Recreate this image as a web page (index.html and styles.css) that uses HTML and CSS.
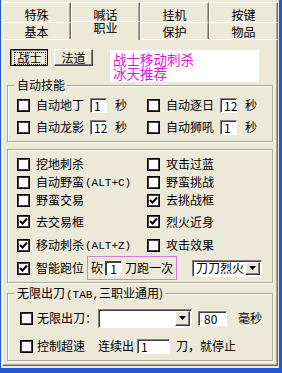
FILE: index.html
```html
<!DOCTYPE html>
<html lang="zh-CN">
<head>
    <meta charset="UTF-8">
    <meta name="viewport" content="width=device-width, initial-scale=1.0">
    <title>职业</title>
    <link rel="stylesheet" href="styles.css">
</head>
<body>
<div class="window">
    <div class="tab-row back">
        <div class="tab">特殊</div>
        <div class="tab">喊话</div>
        <div class="tab">挂机</div>
        <div class="tab">按键</div>
    </div>
    <div class="tab-row front">
        <div class="tab">基本</div>
        <div class="tab active">职业</div>
        <div class="tab">保护</div>
        <div class="tab">物品</div>
    </div>

    <div class="pane">
        <div class="class-row">
            <div class="btn pressed"><span class="focus">战士</span></div>
            <div class="btn">法道</div>
            <div class="note">战士移动刺杀<br>冰天推荐</div>
        </div>

        <fieldset class="group skills">
            <legend>自动技能</legend>
            <div class="grid">
                <div class="opt"><span class="cb"></span><span class="name">自动地丁</span><span class="num">1</span><span class="unit">秒</span></div>
                <div class="opt"><span class="cb"></span><span class="name">自动逐日</span><span class="num">12</span><span class="unit">秒</span></div>
                <div class="opt"><span class="cb"></span><span class="name">自动龙影</span><span class="num">12</span><span class="unit">秒</span></div>
                <div class="opt"><span class="cb"></span><span class="name">自动狮吼</span><span class="num">1</span><span class="unit">秒</span></div>
            </div>
        </fieldset>

        <fieldset class="group options">
            <div class="grid">
                <div class="opt"><span class="cb"></span>挖地刺杀</div>
                <div class="opt"><span class="cb"></span>攻击过蓝</div>
                <div class="opt"><span class="cb"></span>自动野蛮<span class="asc">(ALT+C)</span></div>
                <div class="opt"><span class="cb"></span>野蛮挑战</div>
                <div class="opt"><span class="cb"></span>野蛮交易</div>
                <div class="opt"><span class="cb on"><svg width="9" height="9" viewBox="0 0 9 9"><path d="M1 4 L3.5 6.5 L8 1.5" fill="none" stroke="#000" stroke-width="2"/></svg></span>去挑战框</div>
                <div class="opt"><span class="cb on"><svg width="9" height="9" viewBox="0 0 9 9"><path d="M1 4 L3.5 6.5 L8 1.5" fill="none" stroke="#000" stroke-width="2"/></svg></span>去交易框</div>
                <div class="opt"><span class="cb on"><svg width="9" height="9" viewBox="0 0 9 9"><path d="M1 4 L3.5 6.5 L8 1.5" fill="none" stroke="#000" stroke-width="2"/></svg></span>烈火近身</div>
                <div class="opt"><span class="cb on"><svg width="9" height="9" viewBox="0 0 9 9"><path d="M1 4 L3.5 6.5 L8 1.5" fill="none" stroke="#000" stroke-width="2"/></svg></span>移动刺杀<span class="asc">(ALT+Z)</span></div>
                <div class="opt"><span class="cb"></span>攻击效果</div>
                <div class="opt wide">
                    <span class="cb on"><svg width="9" height="9" viewBox="0 0 9 9"><path d="M1 4 L3.5 6.5 L8 1.5" fill="none" stroke="#000" stroke-width="2"/></svg></span>智能跑位
                    <span class="burst">砍<span class="num">1</span>刀跑一次</span>
                    <span class="combo mode"><span class="val">刀刀烈火</span><span class="arrow"><svg width="7" height="4" viewBox="0 0 7 4"><path d="M0 0 H7 L3.5 4 Z" fill="#000"/></svg></span></span>
                </div>
            </div>
        </fieldset>

        <fieldset class="group endless">
            <legend>无限出刀<span class="asc">(TAB,</span>三职业通用)</legend>
            <div class="line">
                <span class="cb"></span><span class="label">无限出刀：</span>
                <span class="combo blade"><span class="val"></span><span class="arrow"><svg width="7" height="4" viewBox="0 0 7 4"><path d="M0 0 H7 L3.5 4 Z" fill="#000"/></svg></span></span>
                <span class="num ms">80</span><span class="unit">毫秒</span>
            </div>
            <div class="line">
                <span class="cb"></span><span class="label">控制超速</span>
                <span class="count">连续出</span><span class="num times">1</span><span class="unit">刀，就停止</span>
            </div>
        </fieldset>
    </div>
</div>
</body>
</html>
```

FILE: styles.css
```css
* {
    box-sizing: border-box;
}
body {
    margin: 0;
    font: 12px/14px "Noto Sans CJK SC", "Liberation Sans", sans-serif;
    color: #000;
    background: #ece9d8;
}
.window {
    width: 282px;
    height: 373px;
    background: #ece9d8;
    border-left: 1px solid #2456d7;
    border-right: 3px solid #2456d7;
    border-bottom: 5px solid #2456d7;
    padding: 2px 0 0 1px;
}

/* Tabs */
.tab-row {
    display: flex;
    width: 276px;
    line-height: 12px;
}
.tab-row.back {
    height: 20px;
}
.tab-row.front {
    height: 17px;
    position: relative;
    z-index: 1;
}
.tab {
    flex: 1;
    text-align: center;
    border-top: 1px solid #fff;
    border-left: 1px solid #fff;
    border-right: 1px solid #716f64;
    box-shadow: inset -1px 0 #aca899;
}
.back .tab {
    padding-top: 6px;
}
.front .tab {
    padding-top: 3px;
}
.front .tab.active {
    margin-top: -1px;
    height: 19px;
    padding-top: 0;
    background: #ece9d8;
}
.pane {
    width: 276px;
    height: 327px;
    border: 1px solid #fff;
    border-right-color: #716f64;
    border-bottom-color: #716f64;
    box-shadow: inset -1px -1px #aca899;
    padding: 9px 0 0 4px;
}

/* Class buttons */
.class-row {
    display: flex;
    align-items: flex-start;
    height: 29px;
    padding-left: 3px;
}
.btn {
    display: flex;
    align-items: center;
    justify-content: center;
    width: 38px;
    height: 17px;
    border: 1px solid;
    border-color: #fff #404040 #404040 #fff;
    box-shadow: inset -1px -1px #808080;
}
.btn + .btn {
    margin-left: 6px;
    width: 39px;
}
.btn.pressed {
    border-color: #000;
    box-shadow: inset 1px 1px #808080;
}
.focus {
    display: flex;
    align-items: center;
    justify-content: center;
    width: 32px;
    height: 13px;
    border: 1px dotted #000;
    margin: 1px 0 0 1px;
}
.note {
    margin: 1px 0 0 17px;
    width: 149px;
    height: 32px;
    background: #fff;
    color: #e414e4;
    font-size: 13.5px;
    line-height: 14px;
    padding: 2px 0 0 3px;
    flex: none;
}

/* Group boxes */
.group {
    margin: 0;
    width: 266px;
    min-width: 0;
    border: 1px solid #aca899;
    box-shadow: inset 1px 1px #fff, 1px 1px #fff;
    padding: 0 0 0 9px;
}
.group legend {
    padding: 0 2px;
    margin-left: -2px;
    background: #ece9d8;
}
.grid {
    display: grid;
    grid-template-columns: 130px 1fr;
}
.opt {
    display: flex;
    align-items: center;
    white-space: nowrap;
}
.cb {
    display: flex;
    align-items: center;
    justify-content: center;
    flex: none;
    width: 13px;
    height: 13px;
    margin-right: 6px;
    background: #fff;
    border: 1px solid #000;
    box-shadow: inset 1px 1px #404040, inset -1px -1px #404040;
}
.num {
    display: inline-block;
    flex: none;
    width: 17px;
    height: 15px;
    background: #fff;
    border: 1px solid;
    border-color: #808080 #fff #fff #808080;
    box-shadow: inset 1px 1px #404040;
    padding-left: 3px;
    line-height: 13px;
}
.asc {
    font-family: "Liberation Mono", monospace;
    font-size: 11px;
    line-height: 12px;
    margin: 1px 0 0 1px;
}

.skills .grid {
    grid-auto-rows: 22px;
    margin-top: 2px;
    padding-bottom: 3px;
}
.skills .name {
    width: 48px;
}
.skills .num {
    margin-left: 6px;
}
.skills .unit {
    margin-left: 8px;
}

.options {
    margin-top: 7px;
    padding-top: 5px;
    padding-bottom: 2px;
}
.options .grid {
    grid-template-rows: 18px 18px 18px 25px 22px 24px;
}
.opt.wide {
    grid-column: 1 / 3;
}
.burst {
    display: flex;
    align-items: center;
    height: 24px;
    margin-left: 3px;
    padding: 0 3px 0 3px;
    border: 1px solid #d77fd7;
}
.burst .num {
    margin: 0 3px 0 2px;
    text-align: center;
    padding-left: 0;
    border-color: #404040 #fff #fff #404040;
}
.combo {
    display: flex;
    align-items: center;
    flex: none;
    background: #fff;
    border: 1px solid;
    border-color: #808080 #fff #fff #808080;
    box-shadow: inset 1px 1px #404040;
    padding: 1px;
}
.combo .val {
    flex: 1;
    padding-left: 2px;
}
.combo .arrow {
    display: flex;
    align-items: center;
    justify-content: center;
    width: 15px;
    height: 100%;
    background: #ece9d8;
    border: 1px solid;
    border-color: #fff #404040 #404040 #fff;
    box-shadow: inset -1px -1px #808080;
}
.combo.mode {
    width: 70px;
    height: 17px;
    margin-left: 15px;
}

.endless {
    margin-top: 3px;
    padding: 0 0 3px 12px;
}
.endless legend {
    margin-left: -5px;
}
.line {
    display: flex;
    align-items: center;
    height: 22px;
    margin-top: 6px;
    white-space: nowrap;
}
.line .cb {
    margin-right: 4px;
}
.line .label {
    width: 61px;
}
.combo.blade {
    width: 94px;
    height: 19px;
}
.num.ms {
    width: 29px;
    margin-left: 6px;
    padding-left: 5px;
}
.line .unit {
    margin-left: 11px;
}
.count {
    width: 39px;
}
.num.times {
    width: 33px;
}
.times + .unit {
    margin-left: 6px;
}
```
